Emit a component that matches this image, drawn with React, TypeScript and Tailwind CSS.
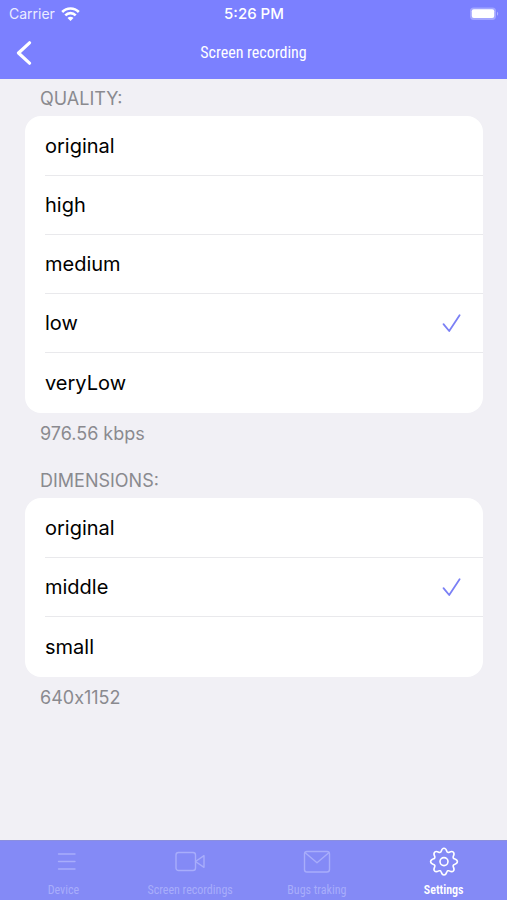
import React, { useState } from "react";

const narrow = "font-['Roboto_Condensed','Liberation_Sans_Narrow',sans-serif]";

const qualities = ['original', 'high', 'medium', 'low', 'veryLow'];
const dimensions = ['original', 'middle', 'small'];

const StatusBar = () => (
    <div className="flex h-[27px] items-center px-2 text-white">
        <div className="flex flex-1 items-center gap-[6px] pl-px">
            <span className="text-[14px] opacity-85">Carrier</span>
            <svg className="h-4 w-[19px]" viewBox="0 0 19 16" fill="none" stroke="white" strokeWidth="2.6">
                <path d="M1.2 6a11.6 11.6 0 0 1 16.6 0" />
                <path d="M4.3 9.3a7.3 7.3 0 0 1 10.4 0" />
                <path d="M9.5 14.9 6.5 11.9a4.2 4.2 0 0 1 6 0z" fill="white" stroke="none" />
            </svg>
        </div>
        <span className="text-[15px] leading-5 font-medium">5:26 PM</span>
        <div className="flex flex-1 justify-end">
            <svg className="h-[14px] w-[30px]" viewBox="0 0 30 14">
                <rect x="1" y="0.5" width="26" height="12.4" rx="3.6" fill="white" fillOpacity="0.3" />
                <rect x="2.8" y="2.3" width="22.4" height="8.8" rx="2" fill="white" />
                <path d="M28 4.7v4c1.6-.7 1.6-3.3 0-4z" fill="white" fillOpacity="0.4" />
            </svg>
        </div>
    </div>
);

type OptionListProps = {
    title: string;
    name: string;
    options: string[];
    initial: string;
    note: string;
};

const OptionList = ({ title, name, options, initial, note }: OptionListProps) => {
    const [selected, setSelected] = useState(initial);

    return (
        <fieldset className="mr-6 ml-[25px]">
            <legend className="flex h-9 items-center px-[15px] text-[18px] text-[#8a8a8f]">{title}</legend>
            <div className="rounded-2xl bg-white pl-5">
                {options.map((o) => (
                    <label key={o} className="flex h-[59px] items-center justify-between border-b border-[#e9e9ec] pr-[21px] text-[20px] text-black first:h-[60px] last:h-[60px] last:border-b-0">
                        <span>{o}</span>
                        <input
                            type="radio"
                            name={name}
                            checked={o === selected}
                            onChange={() => setSelected(o)}
                            className="peer ml-auto w-0 appearance-none"
                        />
                        <svg className="invisible h-5 w-5 peer-checked:visible" viewBox="0 0 20 20" fill="none" stroke="#7b80f5" strokeWidth="1.8" strokeLinecap="round" strokeLinejoin="round">
                            <path d="M1.5 11.2 7.2 18 17.6 2.3" />
                        </svg>
                    </label>
                ))}
            </div>
            <p className="flex h-10 items-center px-[15px] text-[18px] text-[#8a8a8f] [font-feature-settings:'calt'_0]">{note}</p>
        </fieldset>
    );
};

const tabs = [
    {
        label: 'Device',
        icon: <path d="M10.5 7h16.5M10.5 14.5h16.5M10.5 22h16.5" />,
    },
    {
        label: 'Screen recordings',
        icon: (
            <>
                <rect x="1" y="5.5" width="19.5" height="18" rx="2.5" />
                <path d="m20.5 14.5 8.5-5.8v11.6z" />
            </>
        ),
    },
    {
        label: 'Bugs traking',
        icon: (
            <>
                <rect x="2.5" y="4.5" width="25" height="20.5" rx="2.5" />
                <path d="m3.2 5.7 11.8 10 11.8-10" />
            </>
        ),
    },
    {
        label: 'Settings',
        icon: (
            <>
                <path strokeWidth="1.6" d="M12.2 4.2C12.900 1.900 13.500 1.200 15 1.200s2.100.7 2.800 3c.3 1.100 1.500 1.600 2.500 1.100 2.100-1.100 3-1.200 4.100-.1s1 2-.1 4.100c-.5 1 0 2.200 1.100 2.500 2.300.7 3 1.300 3 2.800s-.7 2.100-3 2.800c-1.100.3-1.600 1.500-1.100 2.500 1.100 2.100 1.200 3 .1 4.100s-2 1-4.100-.1c-1-.5-2.200 0-2.500 1.100-.7 2.300-1.300 3-2.800 3s-2.100-.7-2.800-3c-.3-1.100-1.500-1.600-2.500-1.100-2.100 1.100-3 1.200-4.100.1s-1-2 .1-4.100c.5-1 0-2.200-1.100-2.500-2.300-.7-3-1.300-3-2.800s.7-2.100 3-2.800c1.100-.3 1.600-1.500 1.100-2.500-1.100-2.100-1.200-3-.1-4.100s2-1 4.100.1c1 .5 2.200 0 2.500-1.100z" />
                <circle cx="15" cy="14.6" r="4" strokeWidth="1.6" />
            </>
        ),
    },
];

const TabBar = () => {
    const [active, setActive] = useState('Settings');

    return (
        <nav className="grid h-[60px] grid-cols-4 border-t border-[#8b8fdf] bg-[#848af6]">
            {tabs.map((t) => (
                <button
                    key={t.label}
                    onClick={() => setActive(t.label)}
                    className={`flex flex-col items-center pt-[6px] text-[12px] leading-[18px] ${narrow} ${t.label === active ? 'font-semibold text-white' : 'text-[#a8adfb]'}`}
                >
                    <svg className="mb-1 h-[30px] w-[30px]" viewBox="0 0 30 30" fill="none" stroke="currentColor" strokeWidth="1.4" strokeLinejoin="round" strokeLinecap="round">
                        {t.icon}
                    </svg>
                    {t.label}
                </button>
            ))}
        </nav>
    );
};

export default function App() {
    return (
        <div className="flex min-h-screen flex-col bg-[#f1f0f5] font-['Inter',sans-serif]">
            <header className="bg-[#7b80ff]">
                <StatusBar />
                <div className="grid h-[52px] grid-cols-[1fr_auto_1fr] items-center px-4">
                    <button aria-label="Back" className="justify-self-start">
                        <svg className="h-6 w-4" viewBox="0 0 16 24" fill="none" stroke="white" strokeWidth="3.2" strokeLinecap="round" strokeLinejoin="round">
                            <path d="M13.5 1.8 2.5 12l11 10.2" />
                        </svg>
                    </button>
                    <h1 className={`text-[16px] text-white ${narrow}`}>Screen recording</h1>
                </div>
            </header>
            <main className="flex-1 pt-px">
                <OptionList title="QUALITY:" name="quality" options={qualities} initial="low" note="976.56 kbps" />
                <div className="mt-[9px]">
                    <OptionList title="DIMENSIONS:" name="dimensions" options={dimensions} initial="middle" note="640x1152" />
                </div>
            </main>
            <TabBar />
        </div>
    );
}
